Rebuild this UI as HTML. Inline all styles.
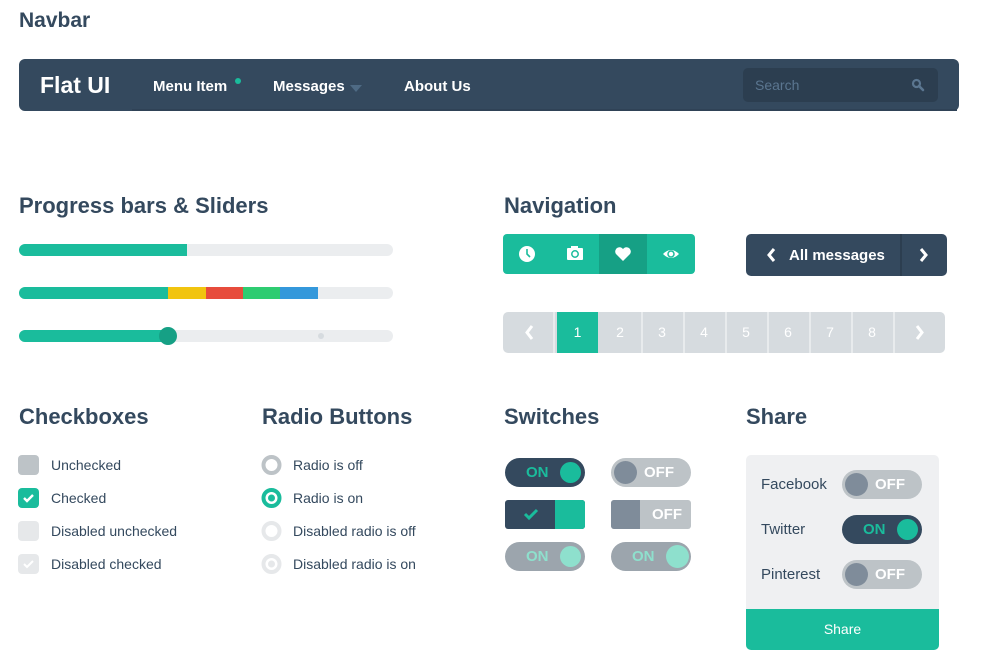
<!DOCTYPE html>
<html><head><meta charset="utf-8"><style>
*{margin:0;padding:0;box-sizing:border-box}
body{width:986px;height:658px;background:#fff;position:relative;overflow:hidden;font-family:"Liberation Sans",sans-serif;color:#34495e}
.a{position:absolute}
h2{position:absolute;font-size:22px;font-weight:bold;color:#34495e;line-height:1}
.lbl{position:absolute;font-size:14px;color:#34495e;line-height:20px}
.bar{position:absolute;left:19px;width:374px;height:12px;border-radius:6px;background:#ebedef;overflow:hidden}
.sw{position:absolute;width:80px;height:29px;border-radius:15px;font-size:15px;font-weight:bold;line-height:29px}
.kn{position:absolute;top:4px;width:21px;height:21px;border-radius:50%}
.pg{position:absolute;top:312px;height:41px;width:40px;text-align:center;line-height:41px;color:#fff;font-size:14px}
</style></head><body>
<h2 style="left:19px;top:10px;font-size:21px">Navbar</h2>
<div class="a" style="left:19px;top:59px;width:940px;height:52px;background:#34495e;border-radius:6px"></div>
<div class="a" style="left:132px;top:109px;width:825px;height:2px;background:#2f4256"></div>
<div class="a" style="left:40px;top:72px;font-size:23px;font-weight:bold;color:#fff">Flat UI</div>
<div class="a" style="left:153px;top:78px;font-size:15px;font-weight:bold;color:#fff">Menu Item</div>
<div class="a" style="left:235px;top:78px;width:6px;height:6px;border-radius:50%;background:#1abc9c"></div>
<div class="a" style="left:273px;top:78px;font-size:15px;font-weight:bold;color:#fff">Messages</div>
<div class="a" style="left:350px;top:85px;border-left:6px solid transparent;border-right:6px solid transparent;border-top:7px solid #4e6a84"></div>
<div class="a" style="left:404px;top:78px;font-size:15px;font-weight:bold;color:#fff">About Us</div>
<div class="a" style="left:743px;top:68px;width:195px;height:34px;background:#2c3e50;border-radius:5px"></div>
<div class="a" style="left:755px;top:77px;font-size:14px;color:#5b7690">Search</div>
<svg class="a" style="left:911px;top:78px" width="14" height="14" viewBox="0 0 14 14"><circle cx="5.5" cy="5.5" r="3.5" fill="none" stroke="#5b7690" stroke-width="2.2"/><path d="M8 8l4 4" stroke="#5b7690" stroke-width="2.6" stroke-linecap="round"/></svg>

<h2 style="left:19px;top:195px">Progress bars &amp; Sliders</h2>
<div class="bar" style="top:244px"><div class="a" style="left:0;top:0;width:168px;height:12px;background:#1abc9c"></div></div>
<div class="bar" style="top:287px">
<div class="a" style="left:0;top:0;width:149px;height:12px;background:#1abc9c"></div>
<div class="a" style="left:149px;top:0;width:38px;height:12px;background:#f1c40f"></div>
<div class="a" style="left:187px;top:0;width:37px;height:12px;background:#e74c3c"></div>
<div class="a" style="left:224px;top:0;width:37px;height:12px;background:#2ecc71"></div>
<div class="a" style="left:261px;top:0;width:38px;height:12px;background:#3498db"></div></div>
<div class="bar" style="top:330px"><div class="a" style="left:0;top:0;width:149px;height:12px;background:#1abc9c"></div><div class="a" style="left:299px;top:3px;width:6px;height:6px;border-radius:50%;background:#d6dbdf"></div></div>
<div class="a" style="left:159px;top:327px;width:18px;height:18px;border-radius:50%;background:#16a085"></div>

<h2 style="left:504px;top:195px">Navigation</h2>
<div class="a" style="left:503px;top:234px;width:192px;height:40px;background:#1abc9c;border-radius:4px;overflow:hidden"><div class="a" style="left:96px;top:0;width:48px;height:40px;background:#16a085"></div></div>
<svg class="a" style="left:503px;top:234px" width="192" height="40" viewBox="0 0 192 40">
<circle cx="24" cy="20" r="8" fill="#fff"/><path d="M24 15v5l3 3" stroke="#1abc9c" stroke-width="1.6" fill="none"/>
<rect x="64" y="14" width="16" height="12" rx="1" fill="#fff"/><rect x="68" y="12" width="7" height="3" fill="#fff"/><circle cx="72" cy="20" r="3.2" fill="none" stroke="#1abc9c" stroke-width="1.5"/>
<path d="M120 27l-7-7a4 4 0 0 1 7-5 4 4 0 0 1 7 5z" fill="#fff"/>
<path d="M160 20q8-8 16 0q-8 8-16 0z" fill="#fff"/><circle cx="168" cy="20" r="3" fill="none" stroke="#1abc9c" stroke-width="1.5"/>
</svg>
<div class="a" style="left:746px;top:234px;width:201px;height:42px;background:#34495e;border-radius:5px"><div class="a" style="left:154px;top:0;width:2px;height:42px;background:#2c3e50"></div></div>
<svg class="a" style="left:746px;top:234px" width="201" height="42"><path d="M28 15l-5 6 5 6" stroke="#fff" stroke-width="3" fill="none"/><path d="M175 15l5 6-5 6" stroke="#fff" stroke-width="3" fill="none"/></svg>
<div class="a" style="left:789px;top:247px;font-size:15px;font-weight:bold;color:#fff">All messages</div>

<div class="a" style="left:503px;top:312px;width:442px;height:41px;background:#d6dbdf;border-radius:5px"></div>
<svg class="a" style="left:503px;top:312px" width="442" height="41"><path d="M29 14l-5 6.5 5 6.5" stroke="#fff" stroke-width="3" fill="none"/><path d="M414 14l5 6.5-5 6.5" stroke="#fff" stroke-width="3" fill="none"/>
<g fill="#e8ebed"><rect x="50" width="2" height="41"/><rect x="138" width="2" height="41"/><rect x="180" width="2" height="41"/><rect x="222" width="2" height="41"/><rect x="264" width="2" height="41"/><rect x="306" width="2" height="41"/><rect x="348" width="2" height="41"/><rect x="390" width="2" height="41"/></g></svg>
<div class="pg" style="left:557px;width:41px;background:#1abc9c">1</div>
<div class="pg" style="left:600px">2</div><div class="pg" style="left:642px">3</div><div class="pg" style="left:684px">4</div><div class="pg" style="left:726px">5</div><div class="pg" style="left:768px">6</div><div class="pg" style="left:810px">7</div><div class="pg" style="left:852px">8</div>

<h2 style="left:19px;top:406px">Checkboxes</h2>
<h2 style="left:262px;top:406px">Radio Buttons</h2>
<h2 style="left:504px;top:406px">Switches</h2>
<h2 style="left:746px;top:406px">Share</h2>

<div class="a" style="left:18px;top:455px;width:21px;height:20px;border-radius:4px;background:#bdc3c7"></div>
<div class="a" style="left:18px;top:488px;width:21px;height:20px;border-radius:4px;background:#1abc9c"></div>
<div class="a" style="left:18px;top:521px;width:21px;height:20px;border-radius:4px;background:#e6e8ea"></div>
<div class="a" style="left:18px;top:554px;width:21px;height:20px;border-radius:4px;background:#e6e8ea"></div>
<svg class="a" style="left:18px;top:488px" width="21" height="90"><path d="M6 10l3 3 6-6" stroke="#fff" stroke-width="2.4" fill="none"/><path d="M6 76l3 3 6-6" stroke="#fff" stroke-width="2" fill="none"/></svg>
<div class="lbl" style="left:51px;top:455px">Unchecked</div>
<div class="lbl" style="left:51px;top:488px">Checked</div>
<div class="lbl" style="left:51px;top:521px">Disabled unchecked</div>
<div class="lbl" style="left:51px;top:554px">Disabled checked</div>

<svg class="a" style="left:261px;top:455px" width="21" height="120">
<circle cx="10.5" cy="10" r="8" fill="none" stroke="#bdc3c7" stroke-width="4"/>
<circle cx="10.5" cy="43" r="8" fill="none" stroke="#1abc9c" stroke-width="4"/><circle cx="10.5" cy="43" r="3.5" fill="#1abc9c"/>
<circle cx="10.5" cy="76" r="8" fill="none" stroke="#e6e8ea" stroke-width="4"/>
<circle cx="10.5" cy="109" r="8" fill="none" stroke="#e6e8ea" stroke-width="4"/><circle cx="10.5" cy="109" r="3.5" fill="#e6e8ea"/></svg>
<div class="lbl" style="left:293px;top:455px">Radio is off</div>
<div class="lbl" style="left:293px;top:488px">Radio is on</div>
<div class="lbl" style="left:293px;top:521px">Disabled radio is off</div>
<div class="lbl" style="left:293px;top:554px">Disabled radio is on</div>

<div class="sw" style="left:505px;top:458px;background:#34495e;color:#1abc9c"><span class="a" style="left:21px">ON</span><div class="kn" style="left:55px;background:#1abc9c"></div></div>
<div class="sw" style="left:611px;top:458px;background:#bdc3c7;color:#fff"><div class="kn" style="left:3px;top:3px;width:23px;height:23px;background:#7f8c9a"></div><span class="a" style="left:33px">OFF</span></div>
<div class="sw" style="left:505px;top:500px;border-radius:3px;background:#34495e;overflow:hidden"><div class="a" style="left:50px;top:0;width:30px;height:29px;background:#1abc9c"></div><svg class="a" style="left:18px;top:8px" width="16" height="13"><path d="M2 6l4 4 8-8" stroke="#1abc9c" stroke-width="3" fill="none"/></svg></div>
<div class="sw" style="left:611px;top:500px;border-radius:3px;background:#bdc3c7;color:#fff;overflow:hidden"><div class="a" style="left:0;top:0;width:29px;height:29px;background:#7f8c9a"></div><span class="a" style="left:41px">OFF</span></div>
<div class="sw" style="left:505px;top:542px;background:#9ca5ad;color:#8ee0cd"><span class="a" style="left:21px">ON</span><div class="kn" style="left:55px;background:#8ee0cd"></div></div>
<div class="sw" style="left:611px;top:542px;background:#9ca5ad;color:#8ee0cd"><span class="a" style="left:21px">ON</span><div class="kn" style="left:55px;top:3px;width:23px;height:23px;background:#8ee0cd"></div></div>

<div class="a" style="left:746px;top:455px;width:193px;height:195px;background:#eff0f2;border-radius:5px;overflow:hidden"><div class="a" style="left:0;top:154px;width:193px;height:41px;background:#1abc9c;color:#fff;text-align:center;line-height:41px;font-size:14px">Share</div></div>
<div class="lbl" style="left:761px;top:475px;font-size:15px">Facebook</div>
<div class="lbl" style="left:761px;top:520px;font-size:15px">Twitter</div>
<div class="lbl" style="left:761px;top:565px;font-size:15px">Pinterest</div>
<div class="sw" style="left:842px;top:470px;background:#bdc3c7;color:#fff"><div class="kn" style="left:3px;top:3px;width:23px;height:23px;background:#7f8c9a"></div><span class="a" style="left:33px">OFF</span></div>
<div class="sw" style="left:842px;top:515px;background:#34495e;color:#1abc9c"><span class="a" style="left:21px">ON</span><div class="kn" style="left:55px;background:#1abc9c"></div></div>
<div class="sw" style="left:842px;top:560px;background:#bdc3c7;color:#fff"><div class="kn" style="left:3px;top:3px;width:23px;height:23px;background:#7f8c9a"></div><span class="a" style="left:33px">OFF</span></div>
</body></html>
